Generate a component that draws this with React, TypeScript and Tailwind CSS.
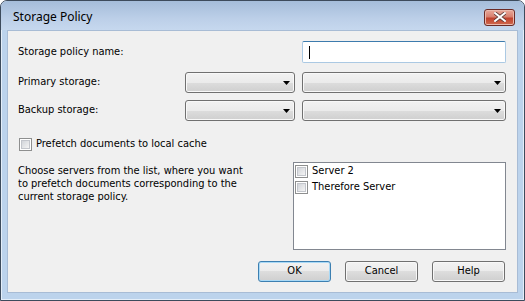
import React from 'react';

const uiFont = "font-['DejaVu_Sans_Condensed','Liberation_Sans',sans-serif]";

const Checkbox: React.FC = () => (
  <div className="w-[13px] h-[13px] shrink-0 border border-[#8e8f8f] bg-white p-[1px]">
    <div className="w-full h-full border border-[#c3c6cc] bg-[linear-gradient(135deg,#d2d5da_0%,#f4f4f4_100%)]" />
  </div>
);

const Combo: React.FC<{ width: string }> = ({ width }) => (
  <div
    className={`${width} h-[21px] rounded-[3px] border border-[#707070] shadow-[inset_0_0_0_1px_#f8f8f8] bg-[linear-gradient(to_bottom,#f2f2f2_0%,#ebebeb_50%,#dddddd_50%,#cfcfcf_100%)] flex items-center justify-end pr-[4px]`}
  >
    <svg width="7" height="4" viewBox="0 0 7 4">
      <path d="M0 0h7L3.5 4z" fill="#000" />
    </svg>
  </div>
);

const Button: React.FC<{ label: string; focused?: boolean }> = ({ label, focused }) => (
  <button
    className={`w-[73px] h-[21px] rounded-[3px] border text-[11px] text-black bg-[linear-gradient(to_bottom,#f2f2f2_0%,#ebebeb_50%,#dddddd_50%,#cfcfcf_100%)] ${
      focused
        ? 'border-[#3c7fb1] shadow-[inset_0_0_0_1px_#a9d9f6]'
        : 'border-[#707070] shadow-[inset_0_0_0_1px_#f8f8f8]'
    }`}
  >
    {label}
  </button>
);

export default function App() {
  return (
    <div className="w-[525px] h-[301px] overflow-hidden bg-white">
      {/* Window frame */}
      <div className="w-full h-full flex flex-col rounded-t-[7px] border border-[#3d4b5c] bg-[#bcd3ec] shadow-[inset_0_0_0_1px_#e4eef9]">
        {/* Title bar */}
        <div className="h-[29px] shrink-0 flex items-center justify-between pl-[12px] pr-[9px] pt-[3px] rounded-t-[6px] bg-[linear-gradient(to_bottom,#a5bdda_0%,#bccfe8_60%,#c6d8ee_100%)]">
          <span className="font-['Noto_Sans',sans-serif] text-[12px] text-black leading-none">Storage Policy</span>
          <div className="w-[31px] h-[17px] rounded-[3px] border border-[#6b2b26] bg-[linear-gradient(to_bottom,#e9a99b_0%,#d8806f_45%,#c0422e_55%,#cf6a4f_100%)] flex items-center justify-center shadow-[inset_0_0_0_1px_#eab9ad]">
            <svg width="12" height="10" viewBox="0 0 12 10">
              <path
                d="M1 1l10 8M11 1L1 9"
                stroke="#5b3a36"
                strokeWidth="3.6"
                strokeLinecap="square"
              />
              <path d="M1 1l10 8M11 1L1 9" stroke="#fff" strokeWidth="2" strokeLinecap="square" />
            </svg>
          </div>
        </div>

        {/* Client area */}
        <div className="flex-1 flex px-[6px] pb-[7px]">
          <div className={`flex-1 flex flex-col bg-[#f0f0f0] border border-[#a8bcd5] pl-[10px] pr-[11px] text-[11px] text-black ${uiFont}`}>
            <div className="mt-[10px] h-[22px] flex items-center justify-between">
              <span>Storage policy name:</span>
              <div className="w-[204px] h-[22px] rounded-[2px] border border-[#abc9e3] border-t-[#3d7bad] bg-white flex items-center pl-[6px]">
                <div className="w-px h-[13px] bg-black" />
              </div>
            </div>

            <div className="mt-[9px] h-[21px] flex items-center gap-[7px]">
              <span className="flex-1">Primary storage:</span>
              <Combo width="w-[110px]" />
              <Combo width="w-[204px]" />
            </div>

            <div className="mt-[7px] h-[21px] flex items-center gap-[7px]">
              <span className="flex-1">Backup storage:</span>
              <Combo width="w-[110px]" />
              <Combo width="w-[204px]" />
            </div>

            <div className="mt-[17px] h-[13px] flex items-center gap-[4px] pl-[1px]">
              <Checkbox />
              <span>Prefetch documents to local cache</span>
            </div>

            <div className="mt-[11px] flex justify-between">
              <p className="mt-[2px] leading-[13px]">
                Choose servers from the list, where you want
                <br />
                to prefetch documents corresponding to the
                <br />
                current storage policy.
              </p>
              <div className="w-[213px] h-[88px] border border-[#828790] bg-white pl-[1px]">
                {['Server 2', 'Therefore Server'].map((s) => (
                  <div key={s} className="h-[16px] flex items-center gap-[4px]">
                    <Checkbox />
                    <span>{s}</span>
                  </div>
                ))}
              </div>
            </div>

            <div className="mt-[11px] flex justify-end gap-[14px] pr-[1px]">
              <Button label="OK" focused />
              <Button label="Cancel" />
              <Button label="Help" />
            </div>
          </div>
        </div>
      </div>
    </div>
  );
}
